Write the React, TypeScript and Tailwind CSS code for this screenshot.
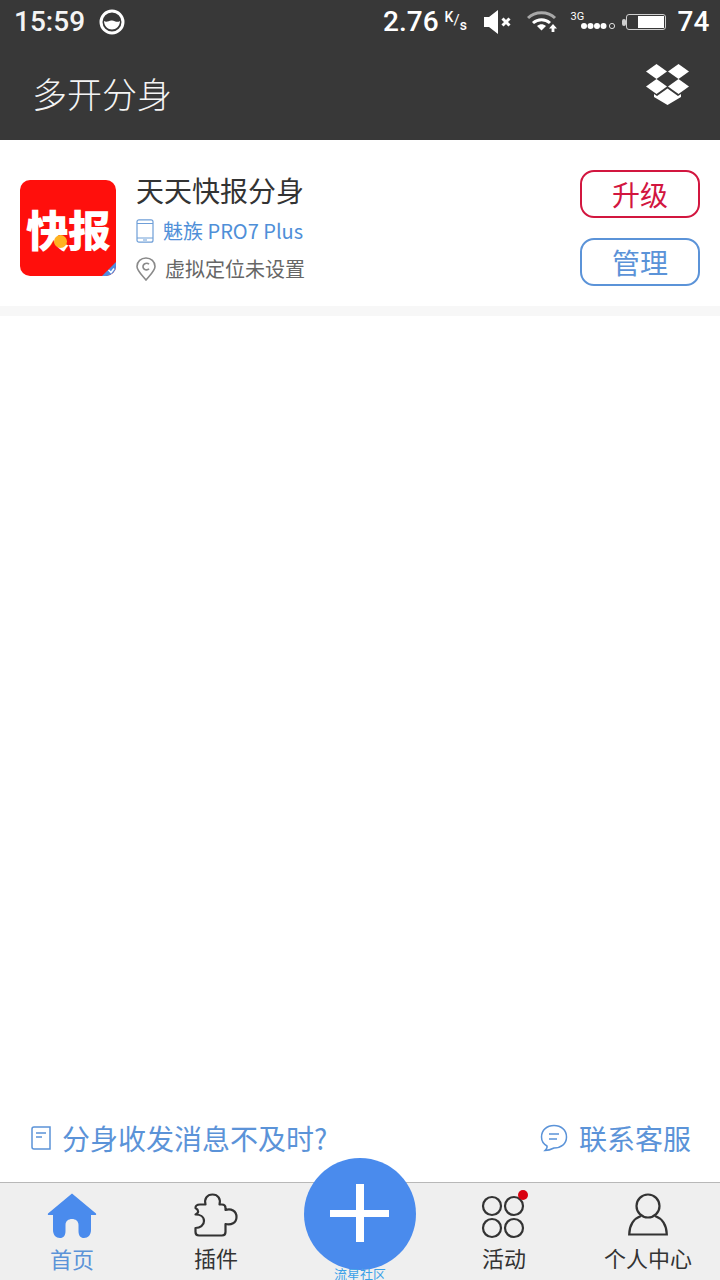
import React from "react";

const cjk = { fontFamily: '"Noto Sans CJK SC", "Noto Sans", sans-serif' };

function MoonIcon() {
  return (
    <svg width="28" height="28" viewBox="0 0 28 28">
      <circle cx="14" cy="14" r="11" fill="none" stroke="#fff" strokeWidth="3" />
      <path d="M6 13 C9 15 11 12 14 12.5 C17 13 19 15 22 13 C22 18 18 21.5 14 21.5 C10 21.5 6 18 6 13Z" fill="#fff" />
    </svg>
  );
}

function Speaker() {
  return (
    <svg width="28" height="24" viewBox="0 0 28 24">
      <path d="M0 7H5L14 0V24L5 17H0Z" fill="#fff" />
      <path d="M18.5 8.5L25.5 15.5M25.5 8.5L18.5 15.5" stroke="#fff" strokeWidth="3" />
    </svg>
  );
}

function Wifi() {
  return (
    <svg width="32" height="24" viewBox="0 0 32 24">
      <path d="M1 8C8 1 21 1 28 8" fill="none" stroke="#a8a8a8" strokeWidth="3" />
      <path d="M6 13C11 8.5 18 8.5 23 13" fill="none" stroke="#fff" strokeWidth="3" />
      <path d="M10 16C13 13.5 16 13.5 19 16L14.5 20.5Z" fill="#fff" />
      <path d="M26 14L30 18.5H27.4V22H24.6V18.5H22Z" fill="#fff" />
    </svg>
  );
}

function Signal() {
  return (
    <div className="flex flex-col w-[46px] h-[30px]">
      <span className="text-[11px] leading-[11px] text-white mt-[4px]" style={{ fontFamily: "Roboto, sans-serif" }}>3G</span>
      <svg width="46" height="10" viewBox="0 0 46 10" className="-mt-[1px]">
        <circle cx="13" cy="5" r="3" fill="#fff" />
        <circle cx="19.5" cy="5" r="3" fill="#fff" />
        <circle cx="26" cy="5" r="3" fill="#fff" />
        <circle cx="32.5" cy="5" r="3" fill="#fff" />
        <circle cx="41" cy="5" r="2.6" fill="none" stroke="#ddd" strokeWidth="1" />
      </svg>
    </div>
  );
}

function Battery() {
  return (
    <svg width="46" height="18" viewBox="0 0 46 18">
      <rect x="0" y="6" width="4" height="7" rx="2" fill="#cfcfcf" />
      <rect x="4.5" y="1.5" width="39" height="15" rx="2.5" fill="none" stroke="#cfcfcf" strokeWidth="1" />
      <rect x="16" y="3" width="26" height="12" fill="#fff" />
    </svg>
  );
}

function Dropbox() {
  return (
    <svg width="44" height="42" viewBox="0 0 44 42" fill="#fff">
      <path d="M10.5 0L21 7.5L10.5 15L0 7.5Z" />
      <path d="M32.5 0L43 7.5L32.5 15L22 7.5Z" />
      <path d="M10.5 15L21 22.5L10.5 30L0 22.5Z" />
      <path d="M32.5 15L43 22.5L32.5 30L22 22.5Z" />
      <path d="M8 30L11 32L21.5 24.5L32 32L35 30V33L21.5 41L8 33Z" />
    </svg>
  );
}

function Phone() {
  return (
    <svg width="18" height="24" viewBox="0 0 18 24" fill="none" stroke="#6f9fd8" strokeWidth="1.2">
      <rect x="1" y="0.8" width="16" height="22.4" rx="2" />
      <path d="M1 4.5H17M1 19H17M7 21H11" />
    </svg>
  );
}

function Pin() {
  return (
    <svg width="20" height="24" viewBox="0 0 20 24" fill="none" stroke="#8a8a8a" strokeWidth="1.6">
      <path d="M10 23C5 17 1 13.5 1 9.5C1 4.5 5 1 10 1C15 1 19 4.5 19 9.5C19 13.5 15 17 10 23Z" />
      <path d="M13 7.3C11.5 5.6 7 6 7 9.8C7 13 11.5 13.6 13 11.8" />
    </svg>
  );
}

function Note() {
  return (
    <svg width="20" height="24" viewBox="0 0 20 24" fill="none" stroke="#5b93d8" strokeWidth="1.5">
      <path d="M1 3C1 1.8 1.8 1 3 1H19V23H3C1.8 23 1 22.2 1 21Z" />
      <path d="M5 7H15M5 11H11" />
    </svg>
  );
}

function Chat() {
  return (
    <svg width="28" height="28" viewBox="0 0 28 28" fill="none" stroke="#5b93d8" strokeWidth="1.5">
      <path d="M14 1.5C21 1.5 26.5 6 26.5 13C26.5 20 21 24 14 24C11 25.5 8 26.5 5 26.5C6.5 25 7.5 23.5 7 22C3.5 20 1.5 17 1.5 13C1.5 6 7 1.5 14 1.5Z" />
      <path d="M9 10H19M9 15H17" />
    </svg>
  );
}

function Home() {
  return (
    <svg width="50" height="46" viewBox="0 0 50 46" fill="#4a8bed">
      <path d="M25 0.5L49 20.5C49.5 21.5 49 22 48 22H44V37C44 42 41 45 37 45C33.5 45 31.5 42.5 31.5 38V32C31.5 28 28.5 26 25 26C21.5 26 18.5 28 18.5 32V38C18.5 42.5 16.5 45 13 45C9 45 6 42 6 37V22H2C1 22 0.5 21.5 1 20.5Z" />
    </svg>
  );
}

function Puzzle() {
  return (
    <svg width="44" height="44" viewBox="0 0 44 44" fill="none" stroke="#333" strokeWidth="2.2" strokeLinejoin="round">
      <path d="M1.5 15C1.5 13 3 11.5 6 11.5H11.5C10 6 13 1.5 18.5 1.5C24 1.5 27 6 25.5 11.5H28C30 11.5 31.5 13 31.5 15V17C37 15 42.5 18 42.5 24C42.5 30 37 32.5 31.5 31V39C31.5 41 30 42.5 28 42.5H5C3 42.5 1.5 41 1.5 39V35C6 35 10 32.5 10 28C10 23.5 6 21.5 1.5 21.5C5 20 5 17 1.5 15Z" />
    </svg>
  );
}

function Circles() {
  return (
    <svg width="46" height="46" viewBox="0 0 46 46" fill="none" stroke="#333" strokeWidth="2.2">
      <circle cx="11" cy="13" r="9" />
      <circle cx="33" cy="13" r="9" />
      <circle cx="11" cy="35" r="9" />
      <circle cx="33" cy="35" r="9" />
    </svg>
  );
}

function Person() {
  return (
    <svg width="40" height="44" viewBox="0 0 40 44" fill="none" stroke="#333" strokeWidth="2.2">
      <circle cx="20" cy="13" r="11.5" />
      <path d="M13 23C6 25.5 1.5 32 1.2 41.5H38.8C38.5 32 34 25.5 27 23" />
    </svg>
  );
}

function Tab({ icon, label, color, iconClass, labelClass }: { icon: React.ReactNode; label: string; color: string; iconClass: string; labelClass: string }) {
  return (
    <div className="flex flex-col items-center">
      <div className={`flex justify-center ${iconClass}`}>{icon}</div>
      <span className={`text-[22px] leading-[30px] ${color} ${labelClass}`}>{label}</span>
    </div>
  );
}

export default function App() {
  return (
    <div className="relative w-[720px] h-[1280px] flex flex-col bg-white overflow-hidden" style={cjk}>
      <header className="h-[140px] bg-[#383838] flex flex-col shrink-0">
        <div className="h-[44px] flex items-center text-white" style={{ fontFamily: "Roboto, sans-serif" }}>
          <span className="ml-[14px] text-[28px] font-medium leading-none text-[#f4f4f4]">15:59</span>
          <span className="ml-[13px]"><MoonIcon /></span>
          <span className="ml-[257px] text-[28px] font-medium leading-none">2.76</span>
          <span className="ml-[6px] flex w-[24px] h-[26px] text-[14px] leading-none font-medium">
            <span className="mt-[1px]">K</span>
            <span className="mt-[4px] text-[15px] font-normal">/</span>
            <span className="mt-[9px]">s</span>
          </span>
          <span className="ml-[15px]"><Speaker /></span>
          <span className="ml-[15px]"><Wifi /></span>
          <span className="ml-[12px]"><Signal /></span>
          <span className="ml-[5px]"><Battery /></span>
          <span className="ml-[10px] text-[28px] font-medium leading-none">74</span>
        </div>
        <div className="flex-1 flex items-center justify-between pl-[32px] pr-[30px]">
          <span className="text-[35px] leading-none text-[#f4f4f4] font-light">多开分身</span>
          <span className="-mt-[15px]"><Dropbox /></span>
        </div>
      </header>

      <section className="h-[166px] flex px-[20px] shrink-0">
        <div className="relative mt-[40px] w-[96px] h-[96px] rounded-[10px] bg-[#ff0f0c] overflow-hidden flex items-center justify-center">
          <span className="text-[43px] leading-none font-black text-white tracking-[-1px] whitespace-nowrap">快报</span>
          <span className="absolute left-[34px] top-[55px] w-[13px] h-[13px] rounded-full bg-[#ffb321]" />
          <svg className="absolute right-0 bottom-0" width="14" height="14" viewBox="0 0 14 14">
            <path d="M14 0V14H0Z" fill="#4f8de0" />
            <path d="M6.5 8L9 10.5L12 6.5" fill="none" stroke="#fff" strokeWidth="1.5" />
          </svg>
        </div>
        <div className="ml-[20px] flex-1 flex flex-col">
          <span className="mt-[30px] text-[28px] leading-[40px] text-[#333]">天天快报分身</span>
          <div className="mt-[2px] flex items-center h-[38px]">
            <Phone />
            <span className="ml-[9px] text-[20px] leading-none text-[#4f8fd8]">魅族 PRO7 Plus</span>
          </div>
          <div className="flex items-center h-[38px]">
            <Pin />
            <span className="ml-[9px] text-[20px] leading-none text-[#666]">虚拟定位未设置</span>
          </div>
        </div>
        <div className="mt-[30px] w-[120px] flex flex-col gap-[20px]">
          <div className="h-[48px] rounded-[14px] border-2 border-[#d2163f] flex items-center justify-center text-[28px] leading-none text-[#d2163f]">升级</div>
          <div className="h-[48px] rounded-[14px] border-2 border-[#5b93d8] flex items-center justify-center text-[28px] leading-none text-[#5b93d8]">管理</div>
        </div>
      </section>

      <div className="h-[10px] bg-[#f7f7f7] shrink-0" />
      <main className="flex-1" />

      <div className="h-[88px] shrink-0 flex items-center justify-between pl-[31px] pr-[29px] text-[28px] leading-none text-[#5b93d8]">
        <div className="flex items-center gap-[11px]">
          <Note />
          <span>分身收发消息不及时?</span>
        </div>
        <div className="flex items-center gap-[11px]">
          <Chat />
          <span>联系客服</span>
        </div>
      </div>

      <nav className="h-[98px] shrink-0 bg-[#efefef] border-t border-[#b8b8b8] grid grid-cols-5">
        <Tab icon={<Home />} label="首页" color="text-[#5b93d8]" iconClass="mt-[10px]" labelClass="mt-[4px]" />
        <Tab icon={<Puzzle />} label="插件" color="text-[#333]" iconClass="mt-[10px]" labelClass="mt-[5px]" />
        <div />
        <Tab
          icon={
            <div className="relative w-[46px] h-[46px]">
              <Circles />
              <span className="absolute right-[-1px] top-[-3px] w-[10px] h-[10px] rounded-full bg-[#d9000f]" />
            </div>
          }
          label="活动"
          color="text-[#333]"
          iconClass="mt-[10px]"
          labelClass="mt-[3px]"
        />
        <Tab icon={<Person />} label="个人中心" color="text-[#333]" iconClass="mt-[10px]" labelClass="mt-[5px]" />
      </nav>

      <div className="absolute left-[304px] top-[1158px] w-[112px] h-[112px] rounded-full bg-[#4a8bed] flex items-center justify-center">
        <svg width="60" height="60" viewBox="0 0 60 60" fill="#fff">
          <path d="M26 0H34V26H59V33H34V58H26V33H0V26H26Z" />
        </svg>
      </div>
      <span className="absolute left-[334px] top-[1267px] text-[13px] leading-[13px] text-[#3ba0e8] whitespace-nowrap">流星社区</span>
    </div>
  );
}
